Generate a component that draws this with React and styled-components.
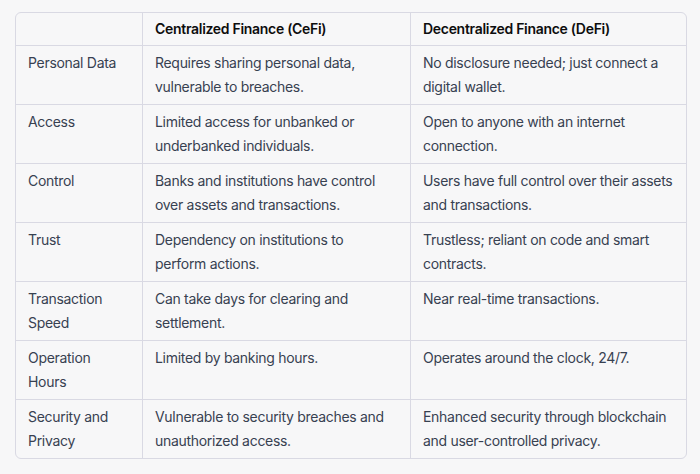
import React from 'react'
import styled, { createGlobalStyle } from 'styled-components'

const GlobalStyle = createGlobalStyle`
  html, body {
    margin: 0;
    padding: 0;
    background: #f7f7f8;
  }
  body {
    font-family: Inter, "Noto Sans", "Liberation Sans", sans-serif;
    -webkit-font-smoothing: antialiased;
  }
`

const Page = styled.div`
  width: 700px;
  height: 474px;
  box-sizing: border-box;
  padding: 12px 13px 0 15px;
`

const Table = styled.div`
  display: grid;
  grid-template-columns: 127px 268px 1fr;
  border: 1px solid #d9d9e3;
  border-radius: 6px;
  overflow: hidden;
  background: #f7f7f8;
`

const Cell = styled.div`
  box-sizing: border-box;
  padding: ${(p) => (p.$head ? '4px 12px' : '5px 12px')};
  font-size: 14px;
  letter-spacing: -0.3px;
  line-height: 24px;
  color: ${(p) => (p.$head ? '#0d0d0d' : '#374151')};
  font-weight: ${(p) => (p.$head ? 600 : 400)};
  border-right: ${(p) => (p.$last ? 'none' : '1px solid #d9d9e3')};
  border-bottom: ${(p) => (p.$bottom ? 'none' : '1px solid #d9d9e3')};
`

const header = ['', 'Centralized Finance (CeFi)', 'Decentralized Finance (DeFi)']

const rows = [
  ['Personal Data', 'Requires sharing personal data, vulnerable to breaches.', 'No disclosure needed; just connect a digital wallet.'],
  ['Access', 'Limited access for unbanked or underbanked individuals.', 'Open to anyone with an internet connection.'],
  ['Control', 'Banks and institutions have control over assets and transactions.', 'Users have full control over their assets and transactions.'],
  ['Trust', 'Dependency on institutions to perform actions.', 'Trustless; reliant on code and smart contracts.'],
  ['Transaction Speed', 'Can take days for clearing and settlement.', 'Near real-time transactions.'],
  ['Operation Hours', 'Limited by banking hours.', 'Operates around the clock, 24/7.'],
  ['Security and Privacy', 'Vulnerable to security breaches and unauthorized access.', 'Enhanced security through blockchain and user-controlled privacy.']
]

export default function App () {
  return (
    <Page>
      <GlobalStyle />
      <Table>
        {header.map((h, i) => (
          <Cell key={'h' + i} $head $last={i === 2}>{h}</Cell>
        ))}
        {rows.map((r, ri) =>
          r.map((c, ci) => (
            <Cell key={ri + '-' + ci} $last={ci === 2} $bottom={ri === rows.length - 1}>{c}</Cell>
          ))
        )}
      </Table>
    </Page>
  )
}
